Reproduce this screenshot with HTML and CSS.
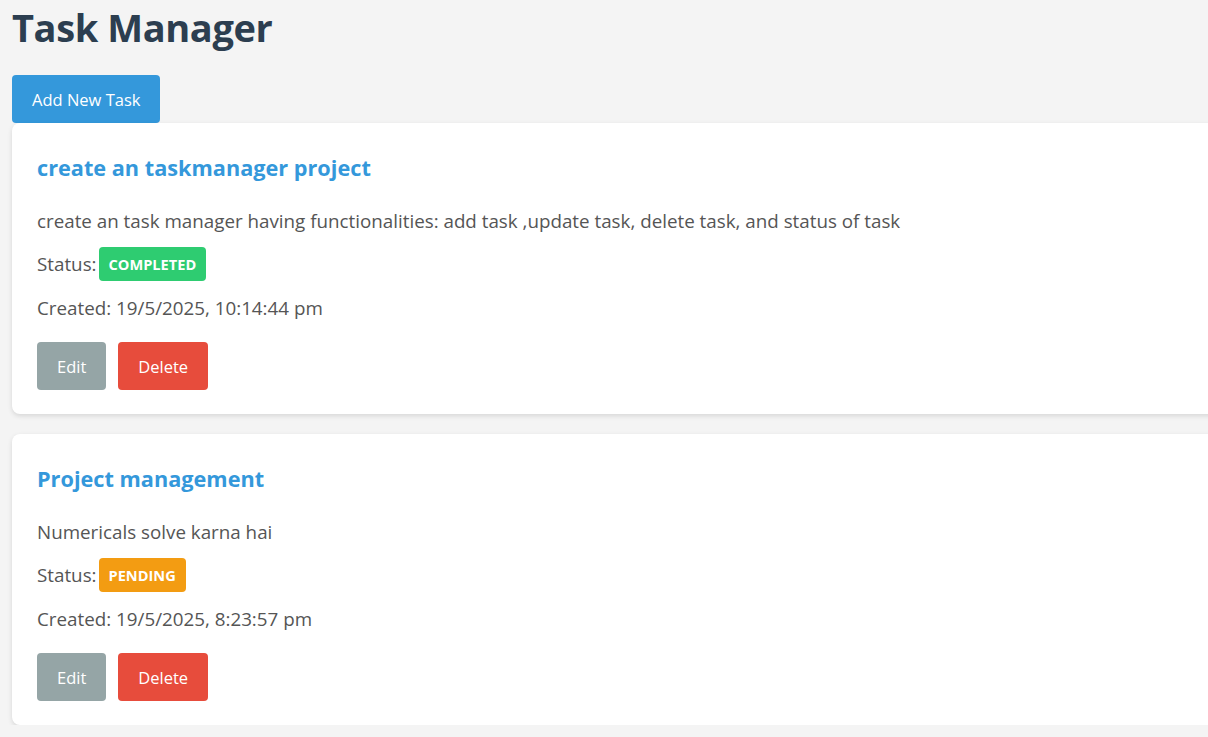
FILE: index.html
```html
<!DOCTYPE html>
<html lang="en">
<head>
<meta charset="utf-8">
<title>Task Manager</title>
<link rel="stylesheet" href="styles.css">
</head>
<body>
  <div class="app">
    <h1 class="title">Task Manager</h1>
    <button class="btn btn-add">Add New Task</button>
    <div class="task-list">
      <div class="task-card">
        <h3 class="task-title">create an taskmanager project</h3>
        <p class="task-desc">create an task manager having functionalities: add task ,update task, delete task, and status of task</p>
        <p class="task-status">Status: <span class="badge badge-completed">COMPLETED</span></p>
        <p class="task-date">Created: 19/5/2025, 10:14:44 pm</p>
        <div class="task-actions">
          <button class="btn btn-edit">Edit</button>
          <button class="btn btn-delete">Delete</button>
        </div>
      </div>
      <div class="task-card">
        <h3 class="task-title">Project management</h3>
        <p class="task-desc">Numericals solve karna hai</p>
        <p class="task-status">Status: <span class="badge badge-pending">PENDING</span></p>
        <p class="task-date">Created: 19/5/2025, 8:23:57 pm</p>
        <div class="task-actions">
          <button class="btn btn-edit">Edit</button>
          <button class="btn btn-delete">Delete</button>
        </div>
      </div>
    </div>
  </div>
</body>
</html>
```

FILE: styles.css
```css
html, body {
  margin: 0;
  padding: 0;
}
body {
  background: #f4f4f4;
  font-family: "Open Sans", "Noto Sans", sans-serif;
  color: #555;
  overflow: hidden;
}
.app {
  padding: 0 12px;
}
.title {
  margin: 0 0 21px;
  font-size: 38px;
  letter-spacing: -0.4px;
  line-height: 54px;
  font-weight: 700;
  color: #2c3e50;
}
.btn {
  font-family: inherit;
  border: none;
  border-radius: 4px;
  color: #fff;
  height: 48px;
  padding: 0 20px;
  font-size: 16.5px;
  cursor: pointer;
}
.btn-add {
  background: #3498db;
  display: block;
}
.task-list {
  display: flex;
  flex-direction: column;
  gap: 20px;
  width: 1240px;
}
.task-card {
  background: #fff;
  border-radius: 8px;
  box-shadow: 0 2px 5px rgba(0, 0, 0, 0.12);
  padding: 30px 25px 24px;
  display: flex;
  flex-direction: column;
}
.task-title {
  margin: 0;
  font-size: 21.7px;
  line-height: 30px;
  color: #3498db;
  font-weight: 700;
}
.task-desc {
  margin: 25px 0 0;
  font-size: 18.8px;
  line-height: 26px;
}
.task-status {
  margin: 13px 0 0;
  font-size: 18.8px;
  line-height: 34px;
  display: flex;
  align-items: center;
  gap: 2px;
}
.badge {
  display: inline-flex;
  align-items: center;
  height: 34px;
  padding: 0 10px;
  border-radius: 4px;
  color: #fff;
  font-weight: 700;
  font-size: 14.6px;
}
.badge-completed { background: #2ecc71; }
.badge-pending { background: #f39c12; }
.task-date {
  margin: 14px 0 0;
  font-size: 18.8px;
  line-height: 26px;
}
.task-actions {
  margin-top: 21px;
  display: flex;
  gap: 12px;
}
.btn-edit { background: #95a5a6; }
.btn-delete { background: #e74c3c; }
```
